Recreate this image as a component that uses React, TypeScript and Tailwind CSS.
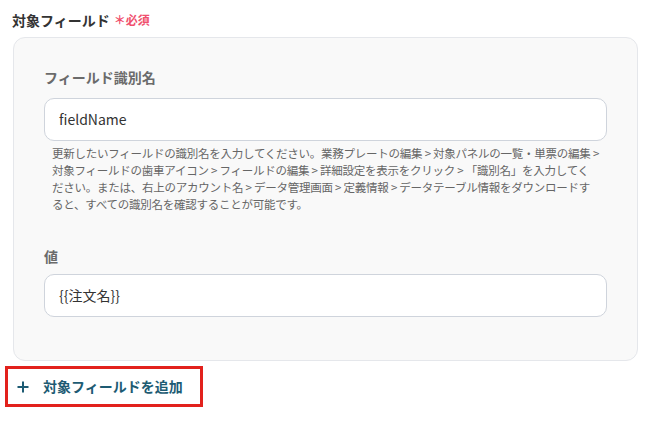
import React from "react";

export default function App() {
  const font = { fontFamily: '"Noto Sans CJK JP", "Noto Sans", sans-serif' };
  const lines = [
    "更新したいフィールドの識別名を入力してください。業務プレートの編集 > 対象パネルの一覧・単票の編集 >",
    "対象フィールドの歯車アイコン > フィールドの編集 > 詳細設定を表示をクリック > 「識別名」を入力してく",
    "ださい。または、右上のアカウント名 > データ管理画面 > 定義情報 > データテーブル情報をダウンロードす",
    "ると、すべての識別名を確認することが可能です。",
  ];
  return (
    <div className="w-[664px] h-[421px] bg-white overflow-hidden" style={font}>
      <div className="pl-[12px] pt-[10px] flex items-center">
        <span className="text-[14px] leading-[20px] font-bold text-[#333333]">対象フィールド</span>
        <span className="ml-[4px] text-[12px] leading-[20px] font-bold text-[#f0506e]">＊必須</span>
      </div>
      <div className="ml-[13px] mt-[7px] w-[625px] h-[324px] rounded-[12px] border border-[#e5e7eb] bg-[#f9f9f9] px-[30px] pt-[29px]">
        <div className="text-[14px] leading-[20px] font-bold text-[#6b6b6b]">フィールド識別名</div>
        <div className="mt-[11px] h-[43px] rounded-[10px] border border-[#cfd4dc] bg-white flex items-center px-[14px] text-[14px] text-[#333333]">
          fieldName
        </div>
        <div className="mt-[4px] pl-[8px] text-[11.5px] leading-[17px] tracking-[-0.25px] text-[#666666]">
          {lines.map((l, i) => (
            <div key={i} className="whitespace-nowrap">
              {l}
            </div>
          ))}
        </div>
        <div className="mt-[33px] text-[14px] leading-[20px] font-bold text-[#6b6b6b]">値</div>
        <div className="mt-[8px] h-[43px] rounded-[10px] border border-[#cfd4dc] bg-white flex items-center px-[14px] text-[14px] text-[#333333]">
          {"{{注文名}}"}
        </div>
      </div>
      <div className="ml-[5px] mt-[5px] w-[198px] h-[41px] border-[3px] border-[#e2211c] flex items-center pl-[9px]">
        <svg width="12" height="12" viewBox="0 0 12 12" className="text-[#1d5b73]">
          <path d="M6 0.5V11.5M0.5 6H11.5" stroke="currentColor" strokeWidth="2" />
        </svg>
        <span className="ml-[14px] text-[14px] font-bold text-[#1d5b73]">対象フィールドを追加</span>
      </div>
    </div>
  );
}
